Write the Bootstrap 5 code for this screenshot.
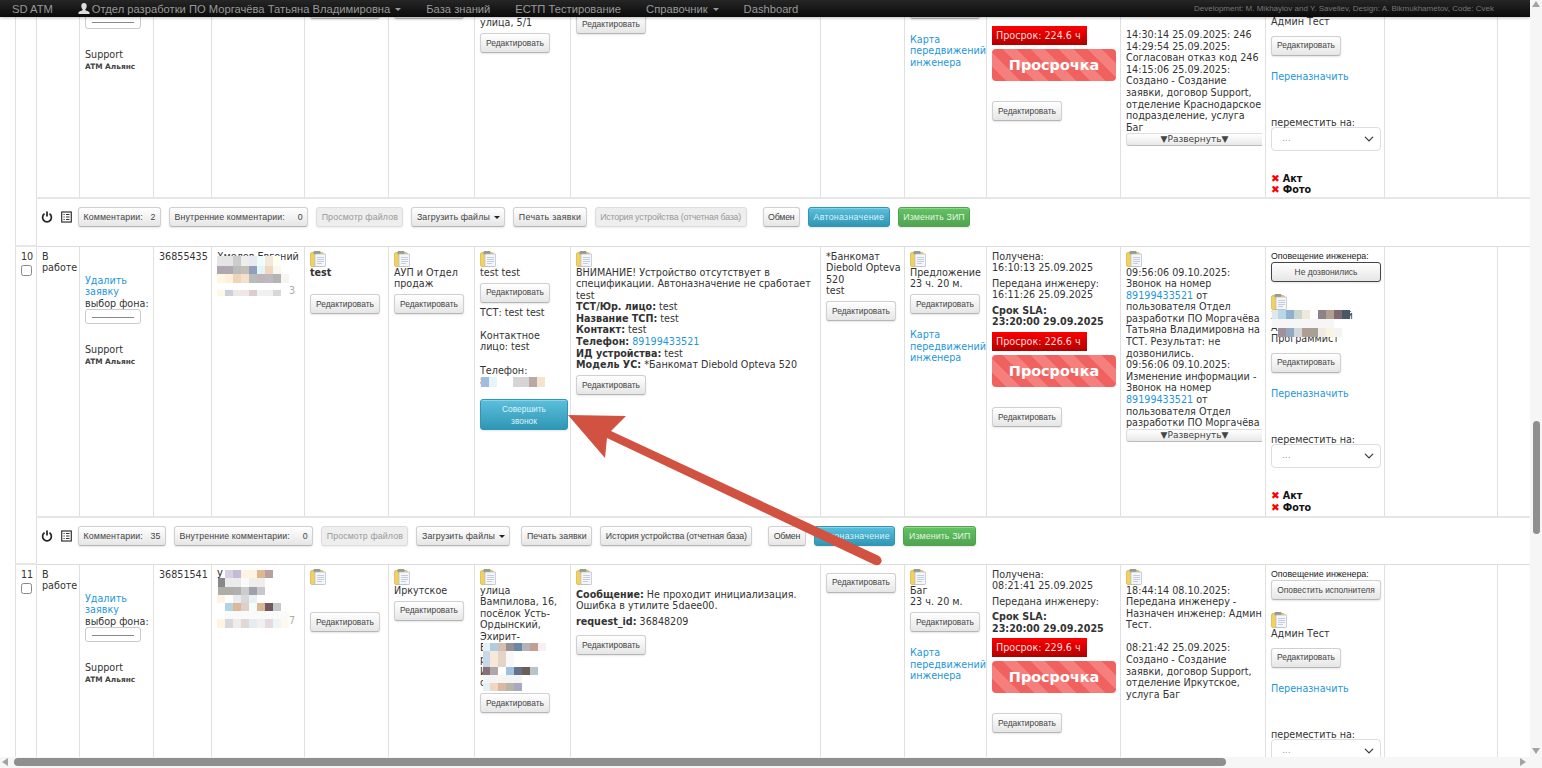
<!DOCTYPE html>
<html lang="ru">
<head>
<meta charset="utf-8">
<title>SD ATM</title>
<link href="https://cdn.jsdelivr.net/npm/bootstrap@5.3.0/dist/css/bootstrap.min.css" rel="stylesheet">
<style>
html,body{height:768px;overflow:hidden;background:#fff}
body{font-family:"DejaVu Sans",sans-serif;font-size:9.6px;line-height:11.6px;color:#333}
a{color:#1e96d8;text-decoration:none}
.shell{height:768px;width:1542px}
.work{height:757px}
.pane{width:1530px;height:757px;overflow:hidden}
.vbar{width:12px;height:757px;background:#f6f6f6}
.hbar{height:11px;background:#f6f6f6;padding:0 2px}
.vthumb{position:absolute;left:3px;top:421px;width:7px;height:113px;background:#8f8f8f;border-radius:4px}
.hthumb{position:absolute;left:14px;top:1px;width:1212px;height:8px;background:#8f8f8f;border-radius:4px}
.arr{position:absolute;width:0;height:0;border:4px solid transparent}
.arr-u{left:2px;top:1px;border-bottom:6px solid #a3a3a3;border-top:0}
.arr-d{left:2px;top:748px;border-top:6px solid #a3a3a3;border-bottom:0}
.arr-l{left:2px;top:1px;border-right:6px solid #a3a3a3;border-left:0}
.arr-r{left:1520px;top:1px;border-left:6px solid #a3a3a3;border-right:0}
.topnav{position:absolute;left:0;top:0;width:1530px;height:17px;padding:0 36px 0 12px;background:linear-gradient(#262626,#0a0a0a);box-shadow:0 1px 3px rgba(0,0,0,.25);z-index:5;font-family:"Liberation Sans",sans-serif;font-size:11.2px;line-height:16px;justify-content:flex-start;flex-wrap:nowrap}
.topnav .brandish,.topnav .navitem{color:#999;white-space:nowrap;padding:0;margin:0;font-size:11.2px}
.topnav .items{gap:25px;margin-left:25px}
.topnav .dropdown-toggle::after{margin-left:5px;border-top:3.5px solid #999;border-left:3px solid transparent;border-right:3px solid transparent;border-bottom:0;vertical-align:2px}
.topnav .credit{font-size:8px;color:#777;white-space:nowrap;margin-left:auto}
.usr{vertical-align:-1px;margin-right:2px}
.ticket{width:1568px;margin:-49px 0 0 15px;table-layout:fixed;border-collapse:collapse;--bs-table-color:#333;color:#333}
.ticket>tbody>tr>td{padding:4px 5px;border:1px solid #e0e0e0;border-top:0;vertical-align:top;font-size:9.6px;line-height:11.6px;box-shadow:none;overflow:hidden}
.ticket>tbody>tr.main>td{border-bottom:2px solid #e6e6e6;padding-bottom:0}
.ticket>tbody>tr.tools>td{border-bottom:1px solid #dcdcdc;padding:8px 5px 0 5px}
.ticket>tbody>tr.r9>td{height:247px}
.ticket>tbody>tr.r10>td{height:271px}
.ticket>tbody>tr.r11>td{height:300px}
.ticket>tbody>tr.tools>td{height:47px}
.ticket>tbody>tr.tools.first>td{height:48px}
.c1{width:21px}.c2{width:43px}.c3{width:74px}.c4{width:58px}.c5{width:93px}.c6{width:84px}.c7{width:86px}.c8{width:96px}.c9{width:250px}.c10{width:84px}.c11{width:82px}.c12{width:134px}.c13{width:145px}.c14{width:119px}.c15{width:113px}.c16{width:86px}
.clip{display:block;width:16px;height:16px}
.old-btn{display:block;width:fit-content;font-family:"Liberation Sans",sans-serif;font-size:8.8px;line-height:11px;padding:3.5px 4.5px;height:20px;color:#444;white-space:nowrap;background:linear-gradient(#fff,#e6e6e6);border:1px solid #d0d0d0;border-bottom-color:#b5b5b5;border-radius:3px;box-shadow:inset 0 1px 0 rgba(255,255,255,.3),0 1px 2px rgba(0,0,0,.1)}
.main .old-btn{font-size:8.4px;padding:3.5px 5px}
.tools .old-btn{letter-spacing:.12px}
.tools .old-btn.tight{letter-spacing:-.2px}
.tools .old-btn.roomy{letter-spacing:.3px}
.tools .old-btn.after-load{margin-left:3px}
.old-btn.wide,.main .old-btn.wide{width:110px;text-align:center;padding:3.5px 2px}
.old-btn.dark-edge{border:1px solid #444}
.old-btn.off{color:#999;background:#eee;opacity:1;border-color:#ddd;box-shadow:0 1px 2px rgba(0,0,0,.08)}
.old-btn.blue{background:linear-gradient(#5bc0de,#2f96b4);color:#dff3f9;border-color:#2f96b4}
.old-btn.green{background:linear-gradient(#62c462,#51a351);color:#e6f6e6;border-color:#51a351}
.main .old-btn.call{width:88px;height:31px;white-space:normal;text-align:center;padding:3px 8px;line-height:12px;margin-top:11px;background:linear-gradient(#5bc0de,#2f96b4);color:#dff3f9;border-color:#2f96b4}
.drop-c::after{content:"";display:inline-block;margin-left:4px;border:3px solid transparent;border-top:3.5px solid #222;border-bottom:0;vertical-align:1px}
.gap-t{margin-top:4.5px}
.lnk-t{margin-top:15px}
.swatch{width:56px;height:15px;border:1px solid #ccc;border-radius:3px;padding:6.5px 6px 0;background:#fff}
.swatch i{display:block;height:1px;background:#888}
.support{margin-top:20px}
.small-firm{font-size:7.4px;font-weight:700;color:#444}
.sub-head{font-family:"Liberation Sans",sans-serif;font-size:8.8px;color:#222}
.sla{width:95px;height:19px;padding:3.5px 4px;color:#ffdcdc;background:linear-gradient(#ff0000,#b00000);white-space:nowrap;margin-top:4px}
.overdue{width:124px;height:32px;margin-top:4px;margin-bottom:20px;border-radius:4px;color:#fff;font-weight:700;font-size:14.4px;line-height:32px;text-align:center;background:repeating-linear-gradient(45deg,#f0625f 0,#f0625f 10px,#f47f7c 10px,#f47f7c 20px)}
.para{margin:0 0 4px}
.logbox{height:162px;overflow:hidden;width:136px}
.logbox.short{height:104px}
.unfold{display:block;width:136px;height:13px;border:1px solid #ddd;border-right:0;border-bottom-color:#bbb;border-radius:3px 0 0 3px;background:linear-gradient(#fff,#e8e8e8);text-align:center;font-size:9px;line-height:11px;color:#444;white-space:nowrap}
.pick{width:110px;height:24px;font-size:9px;color:#999;padding:0 10px;margin-top:-2px;border-radius:4px;background-position:right 5px center;background-size:12px 10px;border-color:#ddd}
.marks{margin-top:22px;font-weight:700;color:#111}
.marks span{color:#f00;font-size:10.5px;line-height:0;margin-right:3px}
.masked{position:relative}
.mosaic{position:absolute;display:block;z-index:1}
.fade-end{color:#aaa}
.arrow-over{position:absolute;left:0;top:0;z-index:3;pointer-events:none}
.t-icons svg{display:block}
.t-icons{gap:8px;margin-left:-1px;margin-right:-2px;padding-top:4px}
.chk{width:11px;height:11px;margin:2px 0 0;border:1px solid #888;border-radius:2px;display:block}
.icon-mt{margin-top:12px}
.relink{margin-top:15px}
.sp-14{height:59px}
.sp-btn{height:43.5px}
.sp-msg{height:59px}
.sp-addr{height:62px}
.sp-sla{height:67px}
.sp-log{height:74px}
.sp-eng{height:61px}
.move-t{margin-top:35px}
</style>
</head>
<body>
<div class="shell d-flex flex-column">
  <div class="work d-flex">
    <div class="pane position-relative">
      <nav class="topnav navbar navbar-dark d-flex align-items-center">
        <span class="brandish">SD ATM</span>
        <div class="items d-flex">
          <a class="navitem dropdown-toggle" href="#"><svg class="usr" width="12" height="11" viewBox="0 0 12 11"><path fill="#ddd" d="M6 0c1.800 0 2.700 1.200 2.700 2.900S7.800 6 7.300 6.600c0 .6.3.9 1.300 1.200 1.300.4 2.400.8 2.900 1.600V11H.5V9.400c.5-.8 1.600-1.200 2.900-1.600 1-.3 1.300-.6 1.300-1.200C4.200 6 3.300 4.600 3.300 2.900S4.200 0 6 0z"/></svg>Отдел разработки ПО Моргачёва Татьяна Владимировна</a>
          <a class="navitem" href="#">База знаний</a>
          <a class="navitem" href="#">ЕСТП Тестирование</a>
          <a class="navitem dropdown-toggle" href="#">Справочник</a>
          <a class="navitem" href="#">Dashboard</a>
        </div>
        <span class="credit">Development: M. Mikhaylov and Y. Saveliev, Design: A. Bikmukhametov, Code: Cvek</span>
      </nav>

      <svg class="d-none">
        <symbol id="clipb" viewBox="0 0 16 16">
          <rect x="0.500" y="1.500" width="13" height="14" rx="1.500" fill="#f2d25e" stroke="#c9a93f" stroke-width=".6"/>
          <rect x="3.500" y="0" width="7" height="3.500" rx="1" fill="#9a9a8a"/>
          <rect x="5" y="3" width="10.500" height="12.500" fill="#f4f6fb" stroke="#a9b3c9" stroke-width=".6"/>
          <path d="M7 6.500h7M7 8.500h7M7 10.500h7M7 12.500h5" stroke="#b9c2d4" stroke-width=".8"/>
        </symbol>
        <symbol id="pwr" viewBox="0 0 12 12">
          <path d="M3.500 2.800a4.400 4.400 0 1 0 5 0" fill="none" stroke="#222" stroke-width="1.700"/>
          <path d="M6 .5v5" stroke="#222" stroke-width="1.700"/>
        </symbol>
        <symbol id="lst" viewBox="0 0 11 12">
          <rect x=".7" y="1" width="9.600" height="10" fill="none" stroke="#333" stroke-width="1.200"/>
          <path d="M2.500 3.500h1.200M5 3.500h3.500M2.500 6h1.200M5 6h3.500M2.500 8.500h1.200M5 8.500h3.500" stroke="#333" stroke-width="1.200"/>
        </symbol>
      </svg>

      <table class="table ticket">
        <colgroup><col class="c1"><col class="c2"><col class="c3"><col class="c4"><col class="c5"><col class="c6"><col class="c7"><col class="c8"><col class="c9"><col class="c10"><col class="c11"><col class="c12"><col class="c13"><col class="c14"><col class="c15"><col class="c16"></colgroup>
        <tbody>
          <!-- row 9, scrolled under the bar -->
          <tr class="main r9">
            <td rowspan="2"></td>
            <td></td>
            <td>
              <div class="sp-14"></div>
              <div class="swatch"><i></i></div>
              <div class="support">Support</div>
              <div class="small-firm">ATM Альянс</div>
            </td>
            <td></td><td></td>
            <td><div class="sp-btn"></div><button class="btn old-btn">Редактировать</button></td>
            <td><div class="sp-btn"></div><button class="btn old-btn">Редактировать</button></td>
            <td><div class="sp-addr"></div><div>улица, 5/1</div><button class="btn old-btn gap-t">Редактировать</button></td>
            <td><div class="sp-msg"></div><button class="btn old-btn">Редактировать</button></td>
            <td></td>
            <td>
              <div class="sp-btn"></div><button class="btn old-btn">Редактировать</button>
              <div class="lnk-t"><a href="#">Карта передвижений инженера</a></div>
            </td>
            <td>
              <div class="sp-sla"></div>
              <div class="sla">Просрок: 224.6 ч</div>
              <div class="overdue">Просрочка</div>
              <button class="btn old-btn">Редактировать</button>
            </td>
            <td>
              <div class="sp-log"></div>
              <div class="logbox short">14:30:14 25.09.2025: 246<br>14:29:54 25.09.2025: Согласован отказ код 246<br>14:15:06 25.09.2025: Создано - Создание заявки, договор Support, отделение Краснодарское подразделение, услуга Баг</div>
              <span class="unfold">▼Развернуть▼</span>
            </td>
            <td>
              <div class="sp-eng"></div>
              <div>Админ Тест</div>
              <button class="btn old-btn mt-2">Редактировать</button>
              <div class="relink"><a href="#">Переназначить</a></div>
              <div class="move-t">переместить на:</div>
              <select class="form-select pick" aria-label="переместить на"><option>...</option></select>
              <div class="marks"><span>✖</span>Акт<br><span>✖</span>Фото</div>
            </td>
            <td></td><td></td>
          </tr>
          <tr class="tools first"><td colspan="15">
            <div class="d-flex align-items-start gap-2">
              <div class="t-icons d-flex"><svg width="12" height="12"><use href="#pwr"/></svg><svg width="11" height="12"><use href="#lst"/></svg></div>
              <button class="btn old-btn">Комментарии: &nbsp;&nbsp;2</button>
              <button class="btn old-btn">Внутренние комментарии: &nbsp;&nbsp;&nbsp;&nbsp;0</button>
              <button class="btn old-btn off">Просмотр файлов</button>
              <button class="btn old-btn drop-c">Загрузить файлы</button>
              <button class="btn old-btn roomy">Печать заявки</button>
              <button class="btn old-btn off tight">История устройства (отчетная база)</button>
              <button class="btn old-btn tight ms-2">Обмен</button>
              <button class="btn old-btn blue roomy">Автоназначение</button>
              <button class="btn old-btn green">Изменить ЗИП</button>
            </div>
          </td></tr>

          <!-- row 10 -->
          <tr class="main r10">
            <td rowspan="2">10<input class="form-check-input chk" type="checkbox" aria-label="выбрать"></td>
            <td>В работе</td>
            <td>
              <div class="mt-4"><a href="#">Удалить заявку</a></div>
              <div class="text-nowrap">выбор фона:</div>
              <div class="swatch"><i></i></div>
              <div class="support">Support</div>
              <div class="small-firm">ATM Альянс</div>
            </td>
            <td>36855435</td>
            <td><div class="masked">Хмелев Евгений<br>&nbsp;<br>&nbsp;<br><div class="text-end pe-1 fade-end">3</div>
              <svg class="mosaic" style="left:0;top:5px" width="73" height="40" viewBox="0 0 73 40">
                <rect width="16" height="10" fill="#e5e5e5"/><rect x="16" width="8" height="10" fill="#ccc"/><rect x="24" width="8" height="10" fill="#eee"/><rect x="32" width="8" height="10" fill="#e8ebf0"/><rect x="40" width="8" height="10" fill="#f0fbfb"/><rect x="48" width="8" height="10" fill="#f4e8d8"/><rect x="56" width="8" height="10" fill="#fffff0"/>
                <rect y="10" width="16" height="8" fill="#b0a8b0"/><rect x="16" y="10" width="8" height="8" fill="#bcbcbc"/><rect x="24" y="10" width="8" height="8" fill="#c4c0b8"/><rect x="32" y="10" width="8" height="8" fill="#90a0bc"/><rect x="40" y="10" width="8" height="8" fill="#e4f6f4"/><rect x="48" y="10" width="8" height="8" fill="#f0d8c0"/><rect x="56" y="10" width="8" height="8" fill="#f8f8f0"/>
                <rect y="18" width="8" height="9" fill="#fff8e0"/><rect x="8" y="18" width="8" height="9" fill="#fff0dc"/><rect x="16" y="18" width="8" height="9" fill="#f0d4b8"/><rect x="24" y="18" width="8" height="9" fill="#f4e0cc"/><rect x="32" y="18" width="8" height="9" fill="#b8bcb8"/><rect x="40" y="18" width="8" height="9" fill="#c0b4bc"/><rect x="48" y="18" width="8" height="9" fill="#c0b8c0"/><rect x="56" y="18" width="8" height="9" fill="#b4b4b4"/><rect x="64" y="18" width="8" height="9" fill="#f8f4f4"/>
                <rect y="34" width="8" height="6" fill="#fff8e8"/><rect x="8" y="34" width="8" height="6" fill="#ccd0dc"/><rect x="16" y="34" width="16" height="6" fill="#f0e8e4"/><rect x="32" y="34" width="8" height="6" fill="#dcccd0"/><rect x="40" y="34" width="16" height="6" fill="#f0f0f0"/><rect x="56" y="34" width="8" height="6" fill="#d8d8d8"/>
              </svg></div>
            </td>
            <td><svg class="clip"><use href="#clipb"/></svg><strong>test</strong><br><br><button class="btn old-btn gap-t">Редактировать</button></td>
            <td><svg class="clip"><use href="#clipb"/></svg>АУП и Отдел продаж<button class="btn old-btn gap-t">Редактировать</button></td>
            <td>
              <svg class="clip"><use href="#clipb"/></svg>test test
              <button class="btn old-btn gap-t">Редактировать</button>
              <div class="mt-1">ТСТ: test test<br><br>Контактное лицо: test<br><br>Телефон:</div>
              <div class="masked">8<br>
                <svg class="mosaic" style="left:1px;top:1px" width="67" height="10" viewBox="0 0 67 10"><rect width="8" height="10" fill="#a0bce0"/><rect x="8" width="8" height="10" fill="#e8f4fc"/><rect x="16" width="16" height="10" fill="#fff"/><rect x="32" width="16" height="10" fill="#d6d4d4"/><rect x="48" width="8" height="10" fill="#b8a8a8"/><rect x="56" width="8" height="10" fill="#f4e4cc"/></svg></div>
              <button class="btn old-btn call">Совершить звонок</button>
            </td>
            <td>
              <svg class="clip"><use href="#clipb"/></svg>
              ВНИМАНИЕ! Устройство отсутствует в спецификации. Автоназначение не сработает test<br>
              <strong>ТСТ/Юр. лицо:</strong> test<br>
              <strong>Название ТСП:</strong> test<br>
              <strong>Контакт:</strong> test<br>
              <strong>Телефон:</strong> <a href="#">89199433521</a><br>
              <strong>ИД устройства:</strong> test<br>
              <strong>Модель УС:</strong> *Банкомат Diebold Opteva 520
              <button class="btn old-btn gap-t">Редактировать</button>
            </td>
            <td><div class="text-nowrap">*Банкомат<br>Diebold Opteva<br>520<br>test</div><button class="btn old-btn gap-t">Редактировать</button></td>
            <td>
              <svg class="clip"><use href="#clipb"/></svg>Предложение<br>23 ч. 20 м.
              <button class="btn old-btn gap-t">Редактировать</button>
              <div class="lnk-t"><a href="#">Карта передвижений инженера</a></div>
            </td>
            <td>
              <p class="para">Получена:<br>16:10:13 25.09.2025</p>
              <p class="para">Передана инженеру:<br>16:11:26 25.09.2025</p>
              <p class="para"><strong>Срок SLA:<br>23:20:00 29.09.2025</strong></p>
              <div class="sla">Просрок: 226.6 ч</div>
              <div class="overdue">Просрочка</div>
              <button class="btn old-btn">Редактировать</button>
            </td>
            <td>
              <svg class="clip"><use href="#clipb"/></svg>
              <div class="logbox">09:56:06 09.10.2025: Звонок на номер <a href="#">89199433521</a> от пользователя Отдел разработки ПО Моргачёва Татьяна Владимировна на ТСТ. Результат: не дозвонились.<br>09:56:06 09.10.2025: Изменение информации - Звонок на номер <a href="#">89199433521</a> от пользователя Отдел разработки ПО Моргачёва Татьяна Владимировна</div>
              <span class="unfold">▼Развернуть▼</span>
            </td>
            <td>
              <div class="sub-head">Оповещение инженера:</div>
              <button class="btn old-btn wide dark-edge">Не дозвонились</button>
              <svg class="clip icon-mt"><use href="#clipb"/></svg>
              <div class="masked">Хмелев Евгений<br>А<br>Программист
                <svg class="mosaic" style="left:1px;top:0" width="78" height="29" viewBox="0 0 78 29">
                  <rect width="6" height="9" fill="#e0e8ec"/><rect x="6" width="8" height="9" fill="#b8d8e8"/><rect x="14" width="8" height="9" fill="#90b0d0"/><rect x="22" width="8" height="9" fill="#c8d8d0"/><rect x="30" width="8" height="9" fill="#f0e8d8"/><rect x="38" width="8" height="9" fill="#fff"/><rect x="46" width="8" height="9" fill="#908088"/><rect x="54" width="8" height="9" fill="#b0a090"/><rect x="62" width="8" height="9" fill="#806870"/><rect x="70" width="8" height="9" fill="#485868"/>
                  <rect y="9" width="62" height="9" fill="#f6f6f6"/>
                  <rect x="6" y="18" width="8" height="9" fill="#a09098"/><rect x="14" y="18" width="8" height="9" fill="#90a8c0"/><rect x="22" y="18" width="8" height="9" fill="#d0d8dc"/><rect x="30" y="18" width="8" height="9" fill="#b09c90"/><rect x="38" y="18" width="8" height="9" fill="#a8a090"/><rect x="46" y="18" width="8" height="9" fill="#f0ece4"/><rect x="54" y="18" width="8" height="9" fill="#f8f4e0"/><rect x="62" y="18" width="8" height="9" fill="#f4f4f4"/>
                </svg></div>
              <button class="btn old-btn mt-2">Редактировать</button>
              <div class="relink"><a href="#">Переназначить</a></div>
              <div class="move-t">переместить на:</div>
              <select class="form-select pick" aria-label="переместить на"><option>...</option></select>
              <div class="marks"><span>✖</span>Акт<br><span>✖</span>Фото</div>
            </td>
            <td></td><td></td>
          </tr>
          <tr class="tools"><td colspan="15">
            <div class="d-flex align-items-start gap-2">
              <div class="t-icons d-flex"><svg width="12" height="12"><use href="#pwr"/></svg><svg width="11" height="12"><use href="#lst"/></svg></div>
              <button class="btn old-btn">Комментарии: &nbsp;&nbsp;35</button>
              <button class="btn old-btn">Внутренние комментарии: &nbsp;&nbsp;&nbsp;&nbsp;0</button>
              <button class="btn old-btn off">Просмотр файлов</button>
              <button class="btn old-btn drop-c">Загрузить файлы</button>
              <button class="btn old-btn after-load">Печать заявки</button>
              <button class="btn old-btn tight">История устройства (отчетная база)</button>
              <button class="btn old-btn tight ms-2">Обмен</button>
              <button class="btn old-btn blue roomy">Автоназначение</button>
              <button class="btn old-btn green">Изменить ЗИП</button>
            </div>
          </td></tr>

          <!-- row 11 -->
          <tr class="main r11">
            <td>11<input class="form-check-input chk" type="checkbox" aria-label="выбрать"></td>
            <td>В работе</td>
            <td>
              <div class="mt-4"><a href="#">Удалить заявку</a></div>
              <div class="text-nowrap">выбор фона:</div>
              <div class="swatch"><i></i></div>
              <div class="support">Support</div>
              <div class="small-firm">ATM Альянс</div>
            </td>
            <td>36851541</td>
            <td><div class="masked">У<br>&nbsp;<br>&nbsp;<br>&nbsp;<br><div class="text-end pe-1 fade-end">7</div>
              <svg class="mosaic" style="left:0;top:1px" width="73" height="58" viewBox="0 0 73 58">
                <rect x="8" width="8" height="8" fill="#d8d0e0"/><rect x="16" width="8" height="8" fill="#c4bcd4"/><rect x="24" width="16" height="8" fill="#fff4e4"/><rect x="40" width="8" height="8" fill="#e0b890"/><rect x="48" width="8" height="8" fill="#b8a0a0"/>
                <rect x="1" y="8" width="7" height="9" fill="#888"/><rect x="8" y="8" width="16" height="9" fill="#ebebeb"/><rect x="24" y="8" width="8" height="9" fill="#fafafa"/><rect x="32" y="8" width="16" height="9" fill="#eee"/>
                <rect x="1" y="17" width="15" height="8" fill="#b0aca8"/><rect x="16" y="17" width="8" height="8" fill="#b0b0b0"/><rect x="24" y="17" width="8" height="8" fill="#ccc"/><rect x="32" y="17" width="8" height="8" fill="#a0a0a8"/><rect x="40" y="17" width="8" height="8" fill="#c8c8c8"/>
                <rect y="25" width="8" height="8" fill="#fff4e4"/><rect x="16" y="25" width="8" height="8" fill="#e8ecf0"/><rect x="24" y="25" width="8" height="8" fill="#d8d8d8"/><rect x="32" y="25" width="8" height="8" fill="#e8f0f4"/>
                <rect x="8" y="33" width="8" height="8" fill="#b0d4e0"/><rect x="16" y="33" width="8" height="8" fill="#dcb898"/><rect x="24" y="33" width="8" height="8" fill="#dcd0c8"/><rect x="32" y="33" width="8" height="8" fill="#f4fcfc"/><rect x="40" y="33" width="8" height="8" fill="#d8b890"/><rect x="48" y="33" width="8" height="8" fill="#705860"/><rect x="56" y="33" width="8" height="8" fill="#c8c8c8"/>
                <rect x="8" y="41" width="64" height="8" fill="#fafafa"/>
                <rect y="49" width="8" height="9" fill="#fff4e0"/><rect x="8" y="49" width="8" height="9" fill="#d8d8dc"/><rect x="16" y="49" width="8" height="9" fill="#f0ece8"/><rect x="24" y="49" width="8" height="9" fill="#e0d8d4"/><rect x="32" y="49" width="8" height="9" fill="#e4ecf0"/><rect x="40" y="49" width="8" height="9" fill="#f0f0f0"/><rect x="48" y="49" width="8" height="9" fill="#e4dcdc"/><rect x="56" y="49" width="8" height="9" fill="#eef4f8"/><rect x="64" y="49" width="8" height="9" fill="#fff8ec"/>
              </svg></div>
            </td>
            <td><svg class="clip"><use href="#clipb"/></svg><br><br><button class="btn old-btn gap-t">Редактировать</button></td>
            <td><svg class="clip"><use href="#clipb"/></svg>Иркутское<button class="btn old-btn gap-t">Редактировать</button></td>
            <td>
              <svg class="clip"><use href="#clipb"/></svg>
              <div class="masked text-nowrap">улица<br>Вампилова, 16,<br>посёлок Усть-<br>Ордынский,<br>Эхирит-<br>Б<br>р<br>И<br>о
                <svg class="mosaic" style="left:3px;top:58px" width="64" height="49" viewBox="0 0 64 49">
                  <rect width="7" height="8" fill="#e8f0f4"/><rect x="7" width="8" height="8" fill="#b0cce0"/><rect x="15" width="8" height="8" fill="#d4c0b0"/><rect x="23" width="8" height="8" fill="#989090"/><rect x="31" width="8" height="8" fill="#6888a8"/><rect x="39" width="8" height="8" fill="#b4b4b8"/><rect x="47" width="8" height="8" fill="#c0a090"/><rect x="55" width="8" height="8" fill="#f8f0f0"/>
                  <rect y="8" width="7" height="16" fill="#c8d8e8"/><rect x="7" y="8" width="8" height="16" fill="#f8e8d8"/><rect x="15" y="8" width="8" height="16" fill="#e4d4c8"/><rect x="23" y="8" width="8" height="16" fill="#f8f8f8"/>
                  <rect y="24" width="7" height="8" fill="#887078"/><rect x="7" y="24" width="8" height="8" fill="#b0a8a8"/><rect x="15" y="24" width="8" height="8" fill="#fff"/><rect x="23" y="24" width="8" height="8" fill="#a0c0e0"/><rect x="31" y="24" width="8" height="8" fill="#687088"/><rect x="39" y="24" width="8" height="8" fill="#686058"/><rect x="47" y="24" width="8" height="8" fill="#b8c4cc"/>
                  <rect y="32" width="39" height="8" fill="#f4f4f4"/>
                  <rect y="40" width="7" height="8" fill="#e4f0f8"/><rect x="7" y="40" width="8" height="8" fill="#f0d8c0"/><rect x="15" y="40" width="8" height="8" fill="#dcb8a0"/><rect x="23" y="40" width="8" height="8" fill="#b8b4a8"/><rect x="31" y="40" width="8" height="8" fill="#a8a8c0"/>
                </svg></div>
              <button class="btn old-btn gap-t">Редактировать</button>
            </td>
            <td>
              <svg class="clip"><use href="#clipb"/></svg>
              <p class="mt-1 mb-1"><strong>Сообщение:</strong> Не проходит инициализация. Ошибка в утилите 5daee00.</p>
              <p class="mb-2"><strong>request_id:</strong> 36848209</p>
              <button class="btn old-btn">Редактировать</button>
            </td>
            <td><button class="btn old-btn mt-1">Редактировать</button></td>
            <td>
              <svg class="clip"><use href="#clipb"/></svg>Баг<br>23 ч. 20 м.
              <button class="btn old-btn gap-t">Редактировать</button>
              <div class="lnk-t"><a href="#">Карта передвижений инженера</a></div>
            </td>
            <td>
              <p class="para">Получена:<br>08:21:41 25.09.2025</p>
              <p class="para">Передана инженеру:</p>
              <p class="para"><strong>Срок SLA:<br>23:20:00 29.09.2025</strong></p>
              <div class="sla">Просрок: 229.6 ч</div>
              <div class="overdue">Просрочка</div>
              <button class="btn old-btn">Редактировать</button>
            </td>
            <td>
              <svg class="clip"><use href="#clipb"/></svg>
              <div class="text-nowrap">18:44:14 08.10.2025:<br>Передана инженеру -<br>Назначен инженер: Админ<br>Тест.<br><br>08:21:42 25.09.2025:<br>Создано - Создание<br>заявки, договор Support,<br>отделение Иркутское,<br>услуга Баг</div>
            </td>
            <td>
              <div class="sub-head">Оповещение инженера:</div>
              <button class="btn old-btn wide">Оповестить исполнителя</button>
              <svg class="clip icon-mt"><use href="#clipb"/></svg>
              <div>Админ Тест</div>
              <button class="btn old-btn mt-2">Редактировать</button>
              <div class="relink"><a href="#">Переназначить</a></div>
              <div class="move-t">переместить на:</div>
              <select class="form-select pick" aria-label="переместить на"><option>...</option></select>
            </td>
            <td></td><td></td>
          </tr>
        </tbody>
      </table>

      <svg class="arrow-over" width="1530" height="757" viewBox="0 0 1530 757">
        <path fill="#d15241" d="M568 415 L626 416 L611 431 L879 556 Q883 559 881 563 Q879 566 875 565 L607 438 L605 458 Z"/>
      </svg>
    </div>
    <div class="vbar position-relative"><span class="arr arr-u"></span><span class="vthumb"></span><span class="arr arr-d"></span></div>
  </div>
  <div class="hbar position-relative"><span class="arr arr-l"></span><span class="hthumb"></span><span class="arr arr-r"></span></div>
</div>
<script src="https://cdn.jsdelivr.net/npm/bootstrap@5.3.0/dist/js/bootstrap.bundle.min.js"></script>
</body>
</html>
